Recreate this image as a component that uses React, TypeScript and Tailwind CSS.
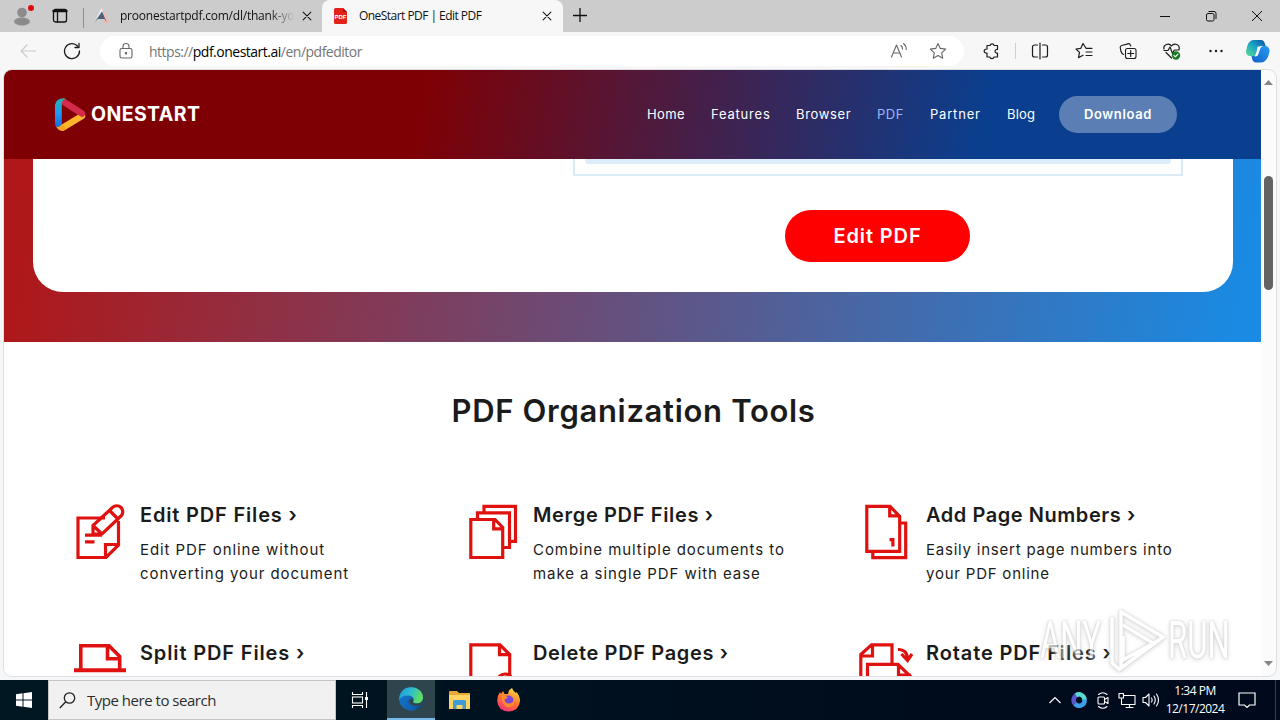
import type { ReactNode } from "react";

const UI = "font-['Open_Sans','Noto_Sans',sans-serif]";

function Glyph({ size = 18, className = "", children }: { size?: number; className?: string; children: ReactNode }) {
  return (
    <svg width={size} height={size} viewBox="0 0 18 18" fill="none" stroke="currentColor" strokeWidth="1.1" strokeLinejoin="round" strokeLinecap="round" className={`shrink-0 ${className}`}>
      {children}
    </svg>
  );
}

function TabStrip() {
  return (
    <div className="flex h-8 bg-[#cccccc] text-[#111]">
      {/* Profile and tab actions */}
      <div className="relative flex w-[83px] shrink-0 items-center">
        <svg width="18" height="20" viewBox="0 0 18 20" className="ml-[13px]" fill="#8b8b8b">
          <circle cx="9" cy="6.5" r="4.8" />
          <ellipse cx="9" cy="15.5" rx="8" ry="4" />
        </svg>
        <span className="absolute left-7 top-[5px] h-1.5 w-1.5 rounded-full bg-[#dd0910]" />
        <Glyph className="ml-5">
          <rect x="2.5" y="2.5" width="13" height="12.5" rx="2" strokeWidth="1.3" />
          <path d="M2.5 4h13" strokeWidth="2.4" />
          <path d="M6.5 5v10" strokeWidth="1.3" />
        </Glyph>
      </div>
      <div className="mt-2 h-5 w-px bg-[#8d8d8d]" />

      {/* Background tab */}
      <div className="flex w-[238px] shrink-0 items-center">
        <svg width="16" height="16" viewBox="0 0 16 16" className="ml-[10px]">
          <path d="M8 0L16 15H11L7 6Z" fill="#f4b9b5" />
          <path d="M7.5 0L0 15L4 12L9 3Z" fill="#e9eef4" />
          <path d="M8 3.5L13 15L10.5 11H4L0 15Z" fill="#4d6178" />
        </svg>
        <div className={`ml-[10px] w-[175px] overflow-hidden whitespace-nowrap text-[12px] tracking-[-0.22px] ${UI} [mask-image:linear-gradient(to_right,#000_85%,transparent)]`}>
          proonestartpdf.com/dl/thank-yo
        </div>
        <Glyph size={14} className="ml-[5px]">
          <path d="M4 4l10 10M14 4l-10 10" strokeWidth="1.3" />
        </Glyph>
      </div>

      {/* Active tab */}
      <div className="flex w-[241px] shrink-0 items-center rounded-t-lg bg-[#f7f7f7]">
        <svg width="14" height="16" viewBox="0 0 14 16" className="ml-[12px] font-['Liberation_Sans',sans-serif]">
          <path d="M1.5 0H9l4 4v10.5a1.5 1.5 0 0 1-1.5 1.5h-10A1.5 1.5 0 0 1 0 14.5v-13A1.5 1.5 0 0 1 1.5 0Z" fill="#e2231a" />
          <path d="M9 0v4h4Z" fill="#a3120c" />
          <text x="6.500" y="10.500" fontSize="6" fontWeight="700" textAnchor="middle" fill="#fff">PDF</text>
        </svg>
        <div className={`ml-[11px] w-[175px] whitespace-nowrap text-[12px] tracking-[-0.54px] ${UI}`}>OneStart PDF | Edit PDF</div>
        <Glyph size={14} className="ml-[6px]">
          <path d="M4 4l10 10M14 4l-10 10" strokeWidth="1.3" />
        </Glyph>
      </div>
      <svg width="16" height="16" viewBox="0 0 16 16" stroke="currentColor" strokeWidth="1.3" className="ml-[9px] mt-[7px]">
        <path d="M8 1v14M1 8.500h14" />
      </svg>

      {/* Window buttons */}
      <div className="ml-auto flex w-[138px] items-center">
        <svg width="46" height="32" fill="none" stroke="currentColor"><path d="M18 16.500h10" /></svg>
        <svg width="46" height="32" fill="none" stroke="currentColor">
          <rect x="18.500" y="13.500" width="7.500" height="7.500" rx="1.500" />
          <path d="M20.500 11.500H26a2 2 0 0 1 2 2V19" />
        </svg>
        <svg width="46" height="32" stroke="currentColor"><path d="M18 11l10 10M28 11l-10 10" /></svg>
      </div>
    </div>
  );
}

function Toolbar() {
  return (
    <div className="flex h-[38px] items-center bg-[#f7f7f7] text-[#1c1c1c]">
      <svg width="18" height="18" viewBox="0 0 18 18" fill="none" stroke="#c9c9c9" strokeWidth="1.1" className="ml-[19px]">
        <path d="M17 9H2M8.500 2.500L2 9l6.500 6.500" />
      </svg>
      <Glyph className="ml-[26px]">
        <path d="M16.500 9A7.500 7.500 0 1 1 14.500 4M16 1.500V5.500H12" strokeWidth="1.3" />
      </Glyph>
      <div className="ml-[19px] flex h-[30px] w-[864px] items-center rounded-full bg-white text-[#666]">
        <Glyph className="ml-[17px]">
          <rect x="3" y="6.500" width="12" height="9.500" rx="1.800" />
          <path d="M6 6.500V4.500a3 3 0 0 1 6 0v2" />
          <circle cx="9" cy="11.300" r=".7" fill="currentColor" />
        </Glyph>
        <div className={`ml-[14px] whitespace-nowrap text-[14px] tracking-[-0.5px] text-[#757575] ${UI}`}>
          https://<span className="text-black">pdf.onestart.ai</span>/en/pdfeditor
        </div>
        <Glyph className="ml-auto mr-[21px]">
          <path d="M1.500 15L6.500 3l5 12M3.300 11h6.500M11 3.500q1.500 1.500 1.500 3.500M13.500 1.500q3 2.500 2.700 6" />
        </Glyph>
        <Glyph className="mr-[17px]">
          <path d="M9 1.500l2.300 4.900 5.400.700-4 3.700 1 5.400L9 13.600l-4.700 2.600 1-5.400-4-3.700 5.400-.700Z" />
        </Glyph>
      </div>

      <Glyph className="ml-[19px]">
        <path d="M4 3.500h3a2.200 2.200 0 0 1 4.200 0h3.300v4c-3.200-.600-3.200 4 0 3.500v4H11c-.500 2.200-3.700 2.200-4.200 0H4v-3.800c-3.800 0-3.800-4.200 0-4.200Z" strokeWidth="1.2" />
      </Glyph>
      <div className="ml-[14px] h-4 w-px bg-[#cfcfcf]" />
      <Glyph className="ml-[15px]">
        <path d="M6.500 3h-3A2 2 0 0 0 1.500 5v8a2 2 0 0 0 2 2h3M11.500 3h3a2 2 0 0 1 2 2v8a2 2 0 0 1-2 2h-3M9 1v16" strokeWidth="1.2" />
      </Glyph>
      <Glyph className="ml-[26px]">
        <path d="M11 6.300L8 1.500 5.800 6.300 1 7l3.500 3.400-1 5.300L8 13.200M11 6.300h6M11 10h6M11 13.500h6" strokeWidth="1.2" />
      </Glyph>
      <Glyph className="ml-[26px]">
        <rect x="6.500" y="6.500" width="10.500" height="10" rx="2" />
        <path d="M4.500 12.500C3 12 2.500 11 2 9.500L1.200 5.500a2 2 0 0 1 1.500-2L9 1.800a2 2 0 0 1 2.400 1.400l.3.800M11.700 8.500v6M8.700 11.500h6" strokeWidth="1.200" />
      </Glyph>
      <Glyph className="ml-[26px]">
        <path d="M1 7C0 2.500 6 .500 8.500 4 11 .500 17.500 2.500 16 7.500M1 8.500h4L7 5l2.500 6.500L11.300 8H16M3 10.500L8.500 16" strokeWidth="1.200" />
        <circle cx="13" cy="13.500" r="4.200" fill="#197b22" stroke="none" />
        <path d="M11 13.500l1.400 1.400 2.500-2.700" stroke="#fff" />
      </Glyph>
      <svg width="16" height="4" viewBox="0 0 16 4" fill="currentColor" className="ml-[27px]">
        <circle cx="2.500" cy="2" r="1.200" /><circle cx="8" cy="2" r="1.200" /><circle cx="13.500" cy="2" r="1.200" />
      </svg>
      <svg width="24" height="23" viewBox="0 0 24 23" className="ml-[22px]">
        <defs>
          <linearGradient id="copA" x1="0" y1="1" x2="1" y2="0"><stop stopColor="#5cdb8d" /><stop offset=".5" stopColor="#1ba6c9" /><stop offset="1" stopColor="#0b4fa5" /></linearGradient>
          <linearGradient id="copB" x1="0" y1="1" x2="1" y2="0"><stop stopColor="#1360c9" /><stop offset="1" stopColor="#279df0" /></linearGradient>
        </defs>
        <path d="M7 0h8q3 0 4 4l.7 2H16q-3 0-4 4l-2 6H4q-4 0-4-5Q2 0 7 0Z" fill="url(#copA)" />
        <path d="M18 6h2q4 1 3.500 6-1 5-3.500 8-2 2.500-5 2.500H10q-3 0-4-4L5.500 16H9q3 0 4-4l1.500-4q1-2 3.500-2Z" fill="url(#copB)" />
        <path d="M11.500 6.500h4Q14 7.500 13 11l-1 4q-1 1.500-3.500 1.500Q10 14 11 10Z" fill="#f5fbff" />
      </svg>
    </div>
  );
}

function Logo() {
  return (
    <div className="flex items-center">
      <svg width="32" height="34" viewBox="0 0 32 34" fill="none" strokeLinecap="round" strokeWidth="6.500">
        <defs>
          <linearGradient id="lgBlue" x1="0" y1="0" x2="0" y2="1"><stop stopColor="#25b3ad" /><stop offset=".5" stopColor="#219af4" /><stop offset="1" stopColor="#1d68e0" /></linearGradient>
        </defs>
        <path d="M8 29.500L27 18" stroke="#fdb52a" />
        <path d="M9 4L27 15.500" stroke="#d42a4b" />
        <path d="M0 7Q1 .5 9 0.200L11 1Q7 1.500 6.800 6V26.500Q4 31 1 28.500Q0 27 0 25Z" fill="url(#lgBlue)" />
        <path d="M1 28.500Q4 30 6.800 26.500L11 31Q5 35.500 1 28.500Z" fill="#f9a51f" />
      </svg>
      <span className="ml-[4px] mt-px font-['Inter',sans-serif] text-[19.5px] font-bold leading-none tracking-[0.4px] text-white">ONESTART</span>
    </div>
  );
}

function SiteHeader() {
  const link = "shrink-0 whitespace-nowrap";
  return (
    <header className="flex h-[89px] shrink-0 items-center bg-[linear-gradient(100deg,#7f0004_33%,#0a3f8f_78%)] pl-[51px] font-['Inter',sans-serif]">
      <Logo />
      <nav className="mb-[2px] ml-auto flex text-[13px] leading-5 text-white">
        <a className={`${link} w-[64px] tracking-[0.4px]`}>Home</a>
        <a className={`${link} w-[85px] tracking-[0.8px]`}>Features</a>
        <a className={`${link} w-[81px] tracking-[0.65px]`}>Browser</a>
        <a className={`${link} w-[53px] tracking-[0.5px] text-[#9fb6f5]`}>PDF</a>
        <a className={`${link} w-[77px] tracking-[0.8px]`}>Partner</a>
        <a className={`${link} w-[52px] tracking-[0.2px]`}>Blog</a>
      </nav>
      <button className="mr-[84px] h-[37px] w-[118px] rounded-full bg-[#5b7fb4] text-[13px] font-semibold tracking-[0.65px] text-white">
        Download
      </button>
    </header>
  );
}

function Hero() {
  return (
    <section className="h-[183px] shrink-0 bg-[linear-gradient(100deg,#b01719_2%,#1a8ae3_98%)] pl-[29px] pr-[28px]">
      <div className="flex h-[133px] flex-col rounded-b-[30px] bg-white">
        <div className="ml-[540px] h-[17px] w-[610px] border-2 border-t-0 border-[#d9ebf7] px-[10px]">
          <div className="h-[5px] rounded-b bg-[#dcecf8]" />
        </div>
        <button className="ml-[752px] mt-[34px] h-[52px] w-[185px] rounded-full bg-[#ff0000] font-['Inter',sans-serif] text-[20px] font-semibold tracking-[0.9px] text-white">
          Edit PDF
        </button>
      </div>
    </section>
  );
}

const tools = [
  {
    title: "Edit PDF Files ›",
    spacing: "tracking-[0.82px]",
    lines: ["Edit PDF online without", "converting your document"],
    lineSpacing: "tracking-[0.92px]",
    box: "74 503 54 60",
    art: (
      <>
        <path d="M105 518H78V557.500H106L118.500 545V521M105.500 557V544.500H118.500M85 535.200H102M85 541.800H94.500" />
        <path d="M93 534V525.500L112.500 507.500A5.900 5.900 0 0 1 121 516L102 534ZM93 525.500L102 534M109.500 510.500L117.500 518.500" />
      </>
    ),
  },
  {
    title: "Merge PDF Files ›",
    spacing: "tracking-[0.65px]",
    lines: ["Combine multiple documents to", "make a single PDF with ease"],
    lineSpacing: "tracking-[0.93px]",
    box: "467 503 54 60",
    art: (
      <path d="M470.800 519.500H495L502.700 527.500V557.500H470.800ZM493.700 519V528.800H503M477.500 518V512.800H509.500V547.500H504M484 512V506.300H515.500V541.300H510" />
    ),
  },
  {
    title: "Add Page Numbers ›",
    spacing: "tracking-[0.55px]",
    lines: ["Easily insert page numbers into", "your PDF online"],
    lineSpacing: "tracking-[0.78px]",
    box: "860 503 54 60",
    art: (
      <>
        <path d="M866.800 506.300H890L899.700 516.500V551.300H866.800ZM889.700 506V515.800H900M900 523H905.700V557.700H872.800V552" />
        <path d="M889.500 539.700H892.900V546.500" />
      </>
    ),
  },
  {
    title: "Split PDF Files ›",
    spacing: "tracking-[0.86px]",
    lines: [],
    lineSpacing: "",
    box: "74 641 54 60",
    art: (
      <>
        <path d="M80.800 669V645.700H109L119.700 656.500V669M107.500 646V658.700H120" strokeWidth="3.600" />
        <path d="M74 670.200H126" strokeWidth="4" />
      </>
    ),
  },
  {
    title: "Delete PDF Pages ›",
    spacing: "tracking-[0.65px]",
    lines: [],
    lineSpacing: "",
    box: "467 641 54 60",
    art: (
      <>
        <path d="M470.800 690V644.800H500L509.700 654.500V690M499.500 645V654.700H510" />
        <circle cx="505" cy="681.500" r="7.500" />
      </>
    ),
  },
  {
    title: "Rotate PDF Files ›",
    spacing: "tracking-[0.88px]",
    lines: [],
    lineSpacing: "",
    box: "860 641 54 60",
    art: (
      <path d="M860.800 690V654.500L871.500 644.800H892V663M872.500 645V656H861M867.500 690V664.300H898L911 677M898.500 664V675H911M898 649.500Q907 649 907.500 659M901.500 654L907.500 660.500L912 654" />
    ),
  },
];

function Tools() {
  return (
    <section className="flex-1 bg-white pl-[70px] pt-[49px] font-['Inter',sans-serif] text-[#1b1b1b]">
      <h2 className="mr-[68px] text-center text-[31px] font-semibold leading-10 tracking-[0.68px]">PDF Organization Tools</h2>
      <div className="mt-[72px] grid grid-cols-[repeat(3,393px)] auto-rows-[138px]">
        {tools.map((tool) => (
          <div key={tool.title} className="flex">
            <svg width="54" height="60" viewBox={tool.box} className="shrink-0 overflow-visible" fill="none" stroke="#e0120f" strokeWidth="3.200">
              {tool.art}
            </svg>
            <div className="ml-3 whitespace-nowrap">
              <h3 className={`text-[20px] font-semibold leading-6 ${tool.spacing}`}>{tool.title}</h3>
              <div className={`mt-[11px] text-[15px] leading-6 ${tool.lineSpacing}`}>
                {tool.lines.map((line) => (
                  <p key={line}>{line}</p>
                ))}
              </div>
            </div>
          </div>
        ))}
      </div>
    </section>
  );
}

function Watermark() {
  const word = "absolute top-[5px] origin-left scale-x-[0.6] text-[52px] leading-none font-['Roboto',sans-serif] text-white";
  return (
    <div className="absolute left-[1040px] top-[610px] h-16 w-[194px] opacity-70 [filter:drop-shadow(0_0_1px_#bbb)_drop-shadow(0_1px_2px_#ccc)]">
      <span className={`${word} left-0`}>ANY</span>
      <svg width="56" height="62" viewBox="0 0 56 62" fill="none" stroke="#fff" strokeWidth="3.500" className="absolute left-[70px] top-0">
        <path d="M11 2L53 27L11 58ZM2 7V53L10 60M13 15L43 33M13 26V50L49 30" />
      </svg>
      <span className={`${word} left-[128px]`}>RUN</span>
    </div>
  );
}

function Taskbar() {
  return (
    <div className={`flex h-10 items-center bg-[linear-gradient(to_right,#001822,#000b1c_80%,#000a1c)] text-white ${UI}`}>
      <svg width="16" height="16" viewBox="0 0 16 16" fill="#fff" className="ml-4">
        <path d="M0 2.200L6.500 1.300V7.500H0ZM7.500 1.200L16 0V7.500H7.500ZM0 8.500H6.500V14.700L0 13.800ZM7.500 8.500H16V16L7.500 14.800Z" />
      </svg>
      <div className="ml-4 flex h-10 w-[288px] items-center border border-[#c4c4c4] bg-[#f1f1f1] text-[#2d2d2d]">
        <svg width="17" height="17" viewBox="0 0 17 17" fill="none" stroke="#222" strokeWidth="1.300" className="ml-[10px]">
          <circle cx="10.500" cy="6" r="5.200" /><path d="M6.800 9.700L.8 16" />
        </svg>
        <span className="ml-[11px] whitespace-nowrap text-[15px] tracking-[-0.48px]">Type here to search</span>
      </div>
      <svg width="18" height="16" viewBox="0 0 18 16" fill="none" stroke="#fff" strokeWidth="1.100" className="ml-[15px]">
        <path d="M1.500 0V2.500H11.500V0M1.500 16V13.500H11.500V16M15.500 0V16" /><rect x="1.500" y="5" width="10" height="6" /><path d="M14 5h3v3h-3z" fill="#fff" stroke="none" />
      </svg>
      <div className="ml-[18px] flex h-10 w-12 items-center justify-center border-b-2 border-[#76b9ed] bg-[#2f454d]">
        <svg width="24" height="24" viewBox="0 0 24 24">
          <defs>
            <linearGradient id="edgeA" x1="0" y1="0" x2="1" y2=".3"><stop stopColor="#2197dd" /><stop offset=".5" stopColor="#2bbad3" /><stop offset="1" stopColor="#5fdf61" /></linearGradient>
            <linearGradient id="edgeB" x1="0" y1="0" x2="1" y2="1"><stop stopColor="#1580d4" /><stop offset="1" stopColor="#0f55a0" /></linearGradient>
          </defs>
          <circle cx="12" cy="12" r="11.800" fill="url(#edgeB)" />
          <path d="M.3 11C1 4 6 .2 12 .2 19 .2 24 5 24 10.500 24 15 20 17 16.500 16.500 14 16 13.500 15 14.500 13.500 15.500 11 13 8.500 9.500 8.500 5 8 1.500 10 .3 13Z" fill="url(#edgeA)" />
          <path d="M9.500 12C7 16 11 20.500 16 20.500 19 20.500 21.500 19 23 17.500L21 21Q14 22 9.500 17Z" fill="#0b4a92" />
          <path d="M14.500 13.500C13.500 15 14 16 16.500 16.500 20 17 22.500 15.500 24 13.500L23 17.500Q17 20.500 12 17.500 9 14.500 12 11Q14 11.500 14.500 13.500Z" fill="#2f454d" />
        </svg>
      </div>
      <svg width="22" height="20" viewBox="0 0 22 20" className="ml-[14px]">
        <path d="M0 2Q0 1 1 1H8L10 3H21V19H0Z" fill="#e9a93a" />
        <path d="M0 5H21V19H0Z" fill="#fcd462" />
        <path d="M4 11.500Q4 10 5.500 10H15.500Q17 10 17 11.500V19H13.500V15H7.500V19H4Z" fill="#3f9ad6" />
      </svg>
      <svg width="23" height="24" viewBox="0 0 23 24" className="ml-[26px]">
        <defs>
          <linearGradient id="ffx" x1=".8" y1="0" x2=".3" y2="1"><stop stopColor="#ffe14a" /><stop offset=".5" stopColor="#ff7a2c" /><stop offset="1" stopColor="#f5317a" /></linearGradient>
        </defs>
        <path d="M15 0Q16 3 19 5L19.500 4Q23 8 23 13 22 23 11.500 23.500 1 23 .2 13 0 8 3 4L4 6 6 3 7.500 6 11 6Q11 2 15 0Z" fill="url(#ffx)" />
        <circle cx="11.500" cy="12.500" r="5" fill="#7a45d6" />
        <path d="M4.500 8Q8 6.500 11 9.500L7.500 11.500Q8 15.500 12 15.500 16 15.500 17 11 19 18 12 19.500 5 19 4.500 8Z" fill="#ff8b2c" />
      </svg>

      {/* Notification area */}
      <div className="ml-auto flex items-center">
        <svg width="12" height="8" viewBox="0 0 12 8" fill="none" stroke="#fff" strokeWidth="1.200"><path d="M.5 7L6 1.500 11.500 7" /></svg>
        <svg width="16" height="16" viewBox="0 0 16 16" fill="none" strokeWidth="4.500" className="ml-[10px]">
          <path d="M8 2.500A5.500 5.500 0 0 0 5 12.500" stroke="#5a55c9" /><path d="M5 3.300A5.500 5.500 0 0 1 13.500 8" stroke="#58d9d1" /><path d="M13.500 7.500A5.500 5.500 0 0 1 4 12" stroke="#3e9ee8" />
        </svg>
        <Glyph className="ml-[7px]">
          <rect x="4" y="6" width="6.500" height="7" rx="1" /><path d="M10.500 8.500L14 6.500V12.500L10.500 10.500M4.500 3.500Q9 0 13 3.500M4.500 15.500Q9 19 13 15.500" />
        </Glyph>
        <Glyph className="ml-[6px]">
          <path d="M5.500 4.500H17V13.500H5.500M11.500 13.500V16.500M8 16.500H15M3.500 7.500V13.500H6" /><rect x="1" y="2.500" width="4.500" height="4.500" />
        </Glyph>
        <Glyph className="ml-[6px]">
          <path d="M1 6.500H3.500L7 3V15L3.500 11.500H1ZM9.500 7Q10.800 9 9.500 11M12 5Q14.500 9 12 13M14.500 3Q18.500 9 14.500 15" />
        </Glyph>
        <div className="ml-[4px] w-[62px] whitespace-nowrap text-center text-[12px] leading-[18px] tracking-[-0.5px]">
          <p>1:34 PM</p>
          <p>12/17/2024</p>
        </div>
        <svg width="18" height="18" viewBox="0 0 18 18" fill="none" stroke="#fff" strokeWidth="1.200" className="ml-[12px]"><path d="M1 2H17V14H11.500L9 16.500 6.500 14H1Z" /></svg>
        <div className="ml-[19px] mr-1 h-10 w-px bg-[#35404d]" />
      </div>
    </div>
  );
}

export default function App() {
  return (
    <div className="relative h-[720px] w-[1280px] overflow-hidden bg-[#f5f7f9]">
      <TabStrip />
      <Toolbar />
      <div className="mx-1 mb-1 flex h-[606px] overflow-hidden rounded-lg bg-[#fbfbfb] shadow-[0_0_0_1px_#dddfe2]">
        <main className="flex w-[1257px] shrink-0 flex-col overflow-hidden">
          <SiteHeader />
          <Hero />
          <Tools />
        </main>
        {/* Scrollbar */}
        <div className="flex flex-1 flex-col items-center">
          <svg width="9" height="5" className="mt-[10px]" fill="#858585"><path d="M4.500 0L9 5H0Z" /></svg>
          <div className="mt-[91px] h-[114px] w-[9px] rounded-full bg-[#636363]" />
          <svg width="9" height="5" className="mb-[10px] mt-auto" fill="#858585"><path d="M0 0H9L4.500 5Z" /></svg>
        </div>
      </div>
      <Taskbar />
      <Watermark />
    </div>
  );
}
